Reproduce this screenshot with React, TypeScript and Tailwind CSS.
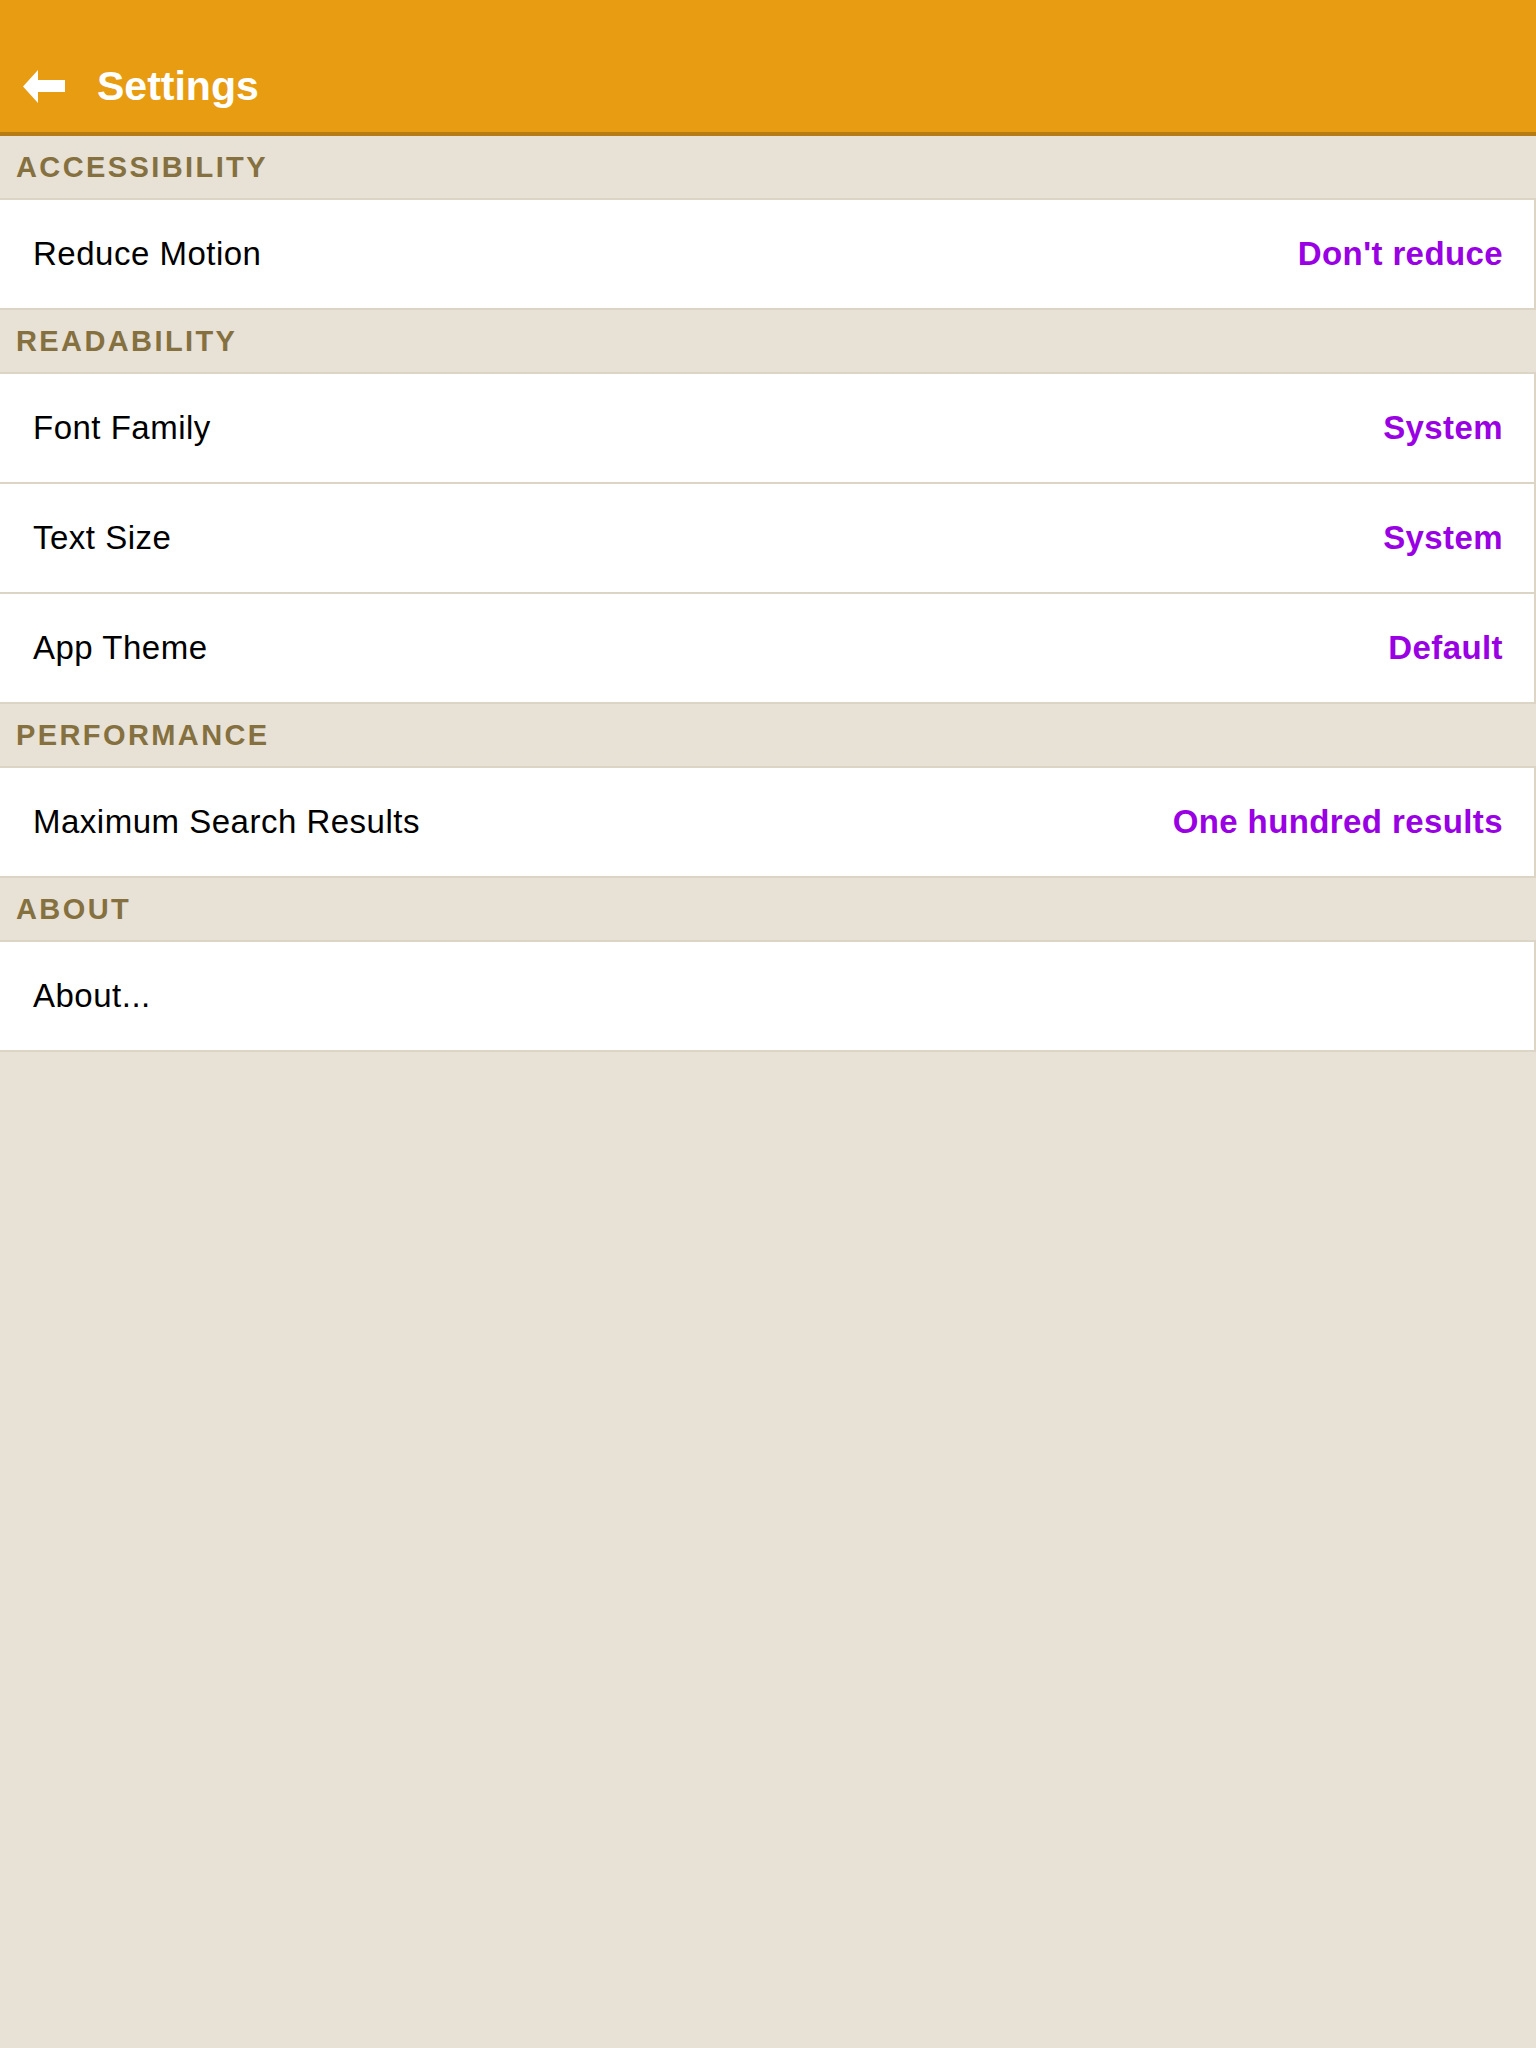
import React from 'react';

type Row = { label: string; value?: string };
type Section = { title: string; rows: Row[] };

const sections: Section[] = [
  { title: 'Accessibility', rows: [{ label: 'Reduce Motion', value: "Don't reduce" }] },
  {
    title: 'Readability',
    rows: [
      { label: 'Font Family', value: 'System' },
      { label: 'Text Size', value: 'System' },
      { label: 'App Theme', value: 'Default' },
    ],
  },
  { title: 'Performance', rows: [{ label: 'Maximum Search Results', value: 'One hundred results' }] },
  { title: 'About', rows: [{ label: 'About...' }] },
];

const BackArrow = () => (
  <svg width="42" height="33" viewBox="0 0 42 33" className="shrink-0">
    <polygon points="0,16.5 15,0 15,10 42,10 42,22 15,22 15,33" fill="#ffffff" />
  </svg>
);

const SettingsRow: React.FC<{ row: Row }> = ({ row }) => (
  <div className="h-[110px] flex items-center justify-between bg-white border-b-2 border-r-2 border-[#dcd5c5] pl-[33px] pr-[31px]">
    <span className="text-[33px] tracking-[0.5px] text-black">{row.label}</span>
    {row.value && (
      <span className="text-[33px] font-bold tracking-[0.4px] text-[#9900e3]">{row.value}</span>
    )}
  </div>
);

export default function App() {
  return (
    <div className="min-h-screen bg-[#e8e1d6] font-['Liberation_Sans',Arial,sans-serif]">
      {/* Top bar */}
      <header className="h-[136px] bg-[#e89c12] border-b-4 border-[#b87c14] flex items-end pb-[25px] pl-[23px]">
        <div className="flex items-center gap-[32px]">
          <BackArrow />
          <h1 className="text-[41px] font-bold text-white leading-none">Settings</h1>
        </div>
      </header>

      {sections.map((section) => (
        <div key={section.title}>
          <div className="h-[64px] flex items-center pl-[16px] border-b-2 border-[#dcd5c5]">
            <span className="text-[29px] font-bold uppercase tracking-[2.4px] text-[#85703f] leading-none">
              {section.title}
            </span>
          </div>
          {section.rows.map((row) => (
            <SettingsRow key={row.label} row={row} />
          ))}
        </div>
      ))}
    </div>
  );
}
